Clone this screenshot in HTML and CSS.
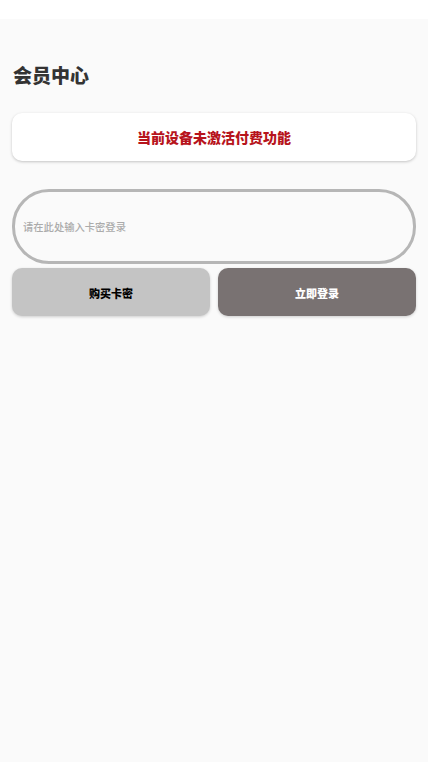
FILE: index.html
```html
<!DOCTYPE html>
<html lang="zh">
<head>
<meta charset="utf-8">
<link rel="stylesheet" href="styles.css">
</head>
<body>
<div class="status"></div>
<main class="page">
  <h1 class="title">会员中心</h1>
  <div class="notice">当前设备未激活付费功能</div>
  <div class="field"><input class="input" type="text" placeholder="请在此处输入卡密登录"></div>
  <div class="actions">
    <div class="btn btn-buy">购买卡密</div>
    <div class="btn btn-login">立即登录</div>
  </div>
</main>
</body>
</html>
```
FILE: styles.css
```css
* { box-sizing: border-box; }
html, body { margin: 0; padding: 0; }
body {
  background: #fafafa;
  font-family: "Noto Sans CJK SC", "Noto Sans", sans-serif;
  height: 762px;
}
.status { height: 19px; background: #ffffff; }
.page { padding: 43px 12px 0; display: flex; flex-direction: column; }
.title {
  margin: 0;
  font-size: 19px;
  line-height: 26px;
  font-weight: 900;
  color: #333333;
  padding-left: 1px;
}
.notice {
  margin-top: 25px;
  height: 48px;
  background: #ffffff;
  border-radius: 10px;
  box-shadow: 0 1px 3px rgba(0,0,0,0.22);
  display: flex;
  align-items: center;
  justify-content: center;
  color: #b7141c;
  font-size: 14px;
  font-weight: 900;
}
.field { margin-top: 28px; }
.input {
  display: block;
  width: 100%;
  height: 75px;
  border: 3px solid #b6b6b6;
  border-radius: 37px;
  background: #fafafa;
  padding: 0 0 0 8px;
  font-family: inherit;
  font-size: 10.3px;
  font-weight: 500;
  color: #333;
  outline: none;
}
.input::placeholder { color: #ababab; }
.actions {
  margin-top: 4px;
  display: flex;
  gap: 8px;
}
.btn {
  flex: 1;
  height: 48px;
  padding-top: 2px;
  border-radius: 10px;
  display: flex;
  align-items: center;
  justify-content: center;
  font-size: 11px;
  font-weight: 900;
  box-shadow: 0 1px 3px rgba(0,0,0,0.18);
}
.btn-buy { background: #c4c4c4; color: #000000; }
.btn-login { background: #797272; color: #ffffff; }
```
